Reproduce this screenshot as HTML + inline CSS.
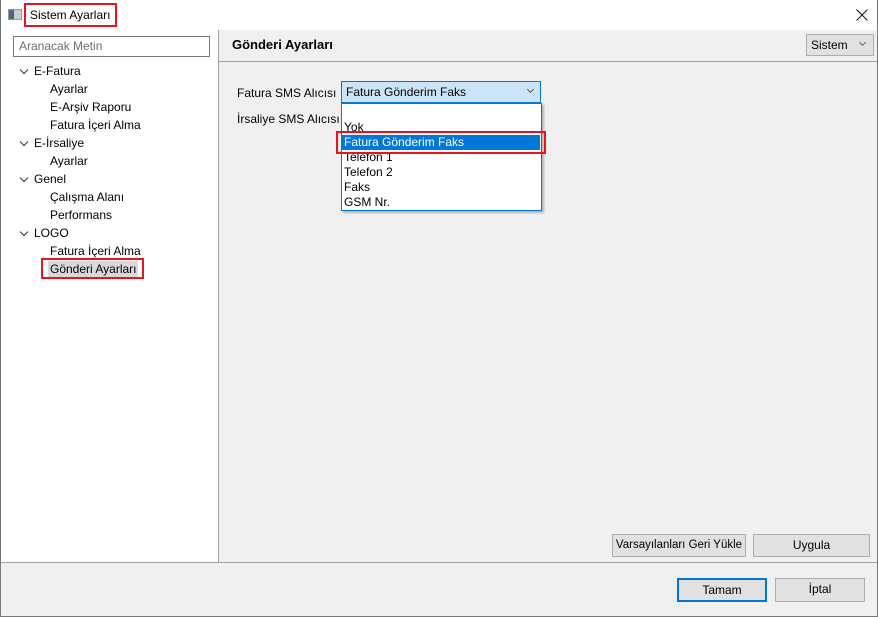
<!DOCTYPE html>
<html><head><meta charset="utf-8"><style>
*{margin:0;padding:0;box-sizing:border-box}
body{width:878px;height:617px;position:relative;overflow:hidden;background:#f0f0f0;font-family:"Segoe UI","Liberation Sans",sans-serif;font-size:12px;color:#000}
.a{position:absolute;white-space:nowrap}
.red{position:absolute;border:2px solid #e8131f}
.btn{position:absolute;background:#e1e1e1;border:1px solid #adadad;text-align:center;line-height:20px}
.chev{position:absolute;width:6px;height:6px;border-right:1px solid #333;border-bottom:1px solid #333;transform:rotate(45deg)}
</style></head><body>
<div class="a" style="left:0;top:0;width:878px;height:30px;background:#fff"></div>
<div class="a" style="left:8px;top:9px;width:14px;height:11px;background:#ccc;border:1px solid #999"></div>
<div class="a" style="left:9px;top:10px;width:5px;height:9px;background:#4a6a7a"></div>
<div class="a" style="left:30px;top:8px">Sistem Ayarları</div>
<div class="red" style="left:24px;top:3px;width:93px;height:24px"></div>
<svg class="a" style="left:856px;top:9px" width="12" height="12"><path d="M0.5 0.5L11.5 11.5M11.5 0.5L0.5 11.5" stroke="#111" stroke-width="1"/></svg>
<div class="a" style="left:1px;top:30px;width:217px;height:533px;background:#fff"></div>
<div class="a" style="left:218px;top:30px;width:1px;height:533px;background:#a0a0a0"></div>
<div class="a" style="left:219px;top:61px;width:659px;height:1px;background:#a0a0a0"></div>
<div class="a" style="left:0;top:562px;width:878px;height:1px;background:#a0a0a0"></div>
<div class="a" style="left:0;top:0;width:1px;height:617px;background:#777"></div>
<div class="a" style="left:877px;top:0;width:1px;height:617px;background:#777"></div>
<div class="a" style="left:0;top:616px;width:878px;height:1px;background:#777"></div>
<div class="a" style="left:13px;top:36px;width:197px;height:21px;border:1px solid #7a7a7a;background:#fff;color:#6d6d6d;padding:2px 5px">Aranacak Metin</div>
<div class="chev" style="left:21px;top:67px"></div><div class="a" style="left:34px;top:64px">E-Fatura</div>
<div class="a" style="left:50px;top:82px">Ayarlar</div>
<div class="a" style="left:50px;top:100px">E-Arşiv Raporu</div>
<div class="a" style="left:50px;top:118px">Fatura İçeri Alma</div>
<div class="chev" style="left:21px;top:139px"></div><div class="a" style="left:34px;top:136px">E-İrsaliye</div>
<div class="a" style="left:50px;top:154px">Ayarlar</div>
<div class="chev" style="left:21px;top:175px"></div><div class="a" style="left:34px;top:172px">Genel</div>
<div class="a" style="left:50px;top:190px">Çalışma Alanı</div>
<div class="a" style="left:50px;top:208px">Performans</div>
<div class="chev" style="left:21px;top:229px"></div><div class="a" style="left:34px;top:226px">LOGO</div>
<div class="a" style="left:50px;top:244px">Fatura İçeri Alma</div>
<div class="a" style="left:48px;top:261px;width:90px;height:16px;background:#d9d9d9"></div>
<div class="a" style="left:50px;top:262px">Gönderi Ayarları</div>
<div class="red" style="left:41px;top:258px;width:103px;height:21px"></div>
<div class="a" style="left:232px;top:37px;font-weight:bold;font-size:13px">Gönderi Ayarları</div>
<div class="a" style="left:806px;top:34px;width:68px;height:22px;border:1px solid #adadad;background:#e1e1e1;padding:3px 4px">Sistem</div>
<div class="chev" style="left:860px;top:40px;width:5px;height:5px;border-color:#666"></div>
<div class="a" style="left:237px;top:86px">Fatura SMS Alıcısı</div>
<div class="a" style="left:237px;top:112px">İrsaliye SMS Alıcısı</div>
<div class="a" style="left:341px;top:81px;width:200px;height:22px;border:1px solid #0078d7;background:#cce4f7;padding:3px 4px">Fatura Gönderim Faks</div>
<div class="chev" style="left:528px;top:87px;width:5px;height:5px;border-color:#555"></div>
<div class="a" style="left:341px;top:103px;width:201px;height:108px;border:1px solid #0078d7;background:#fff;box-shadow:2px 2px 2px rgba(0,0,0,.25)"></div>
<div class="a" style="left:344px;top:120px">Yok</div>
<div class="a" style="left:342px;top:135px;width:198px;height:15px;background:#0078d7"></div>
<div class="a" style="left:344px;top:135px;color:#fff">Fatura Gönderim Faks</div>
<div class="a" style="left:344px;top:150px">Telefon 1</div>
<div class="a" style="left:344px;top:165px">Telefon 2</div>
<div class="a" style="left:344px;top:180px">Faks</div>
<div class="a" style="left:344px;top:195px">GSM Nr.</div>
<div class="red" style="left:336px;top:131px;width:210px;height:23px"></div>
<div class="btn" style="left:612px;top:534px;width:134px;height:23px;font-size:11.5px">Varsayılanları Geri Yükle</div>
<div class="btn" style="left:753px;top:534px;width:117px;height:23px">Uygula</div>
<div class="btn" style="left:677px;top:578px;width:90px;height:24px;border:2px solid #0078d7">Tamam</div>
<div class="btn" style="left:775px;top:578px;width:90px;height:24px">İptal</div>
</body></html>
